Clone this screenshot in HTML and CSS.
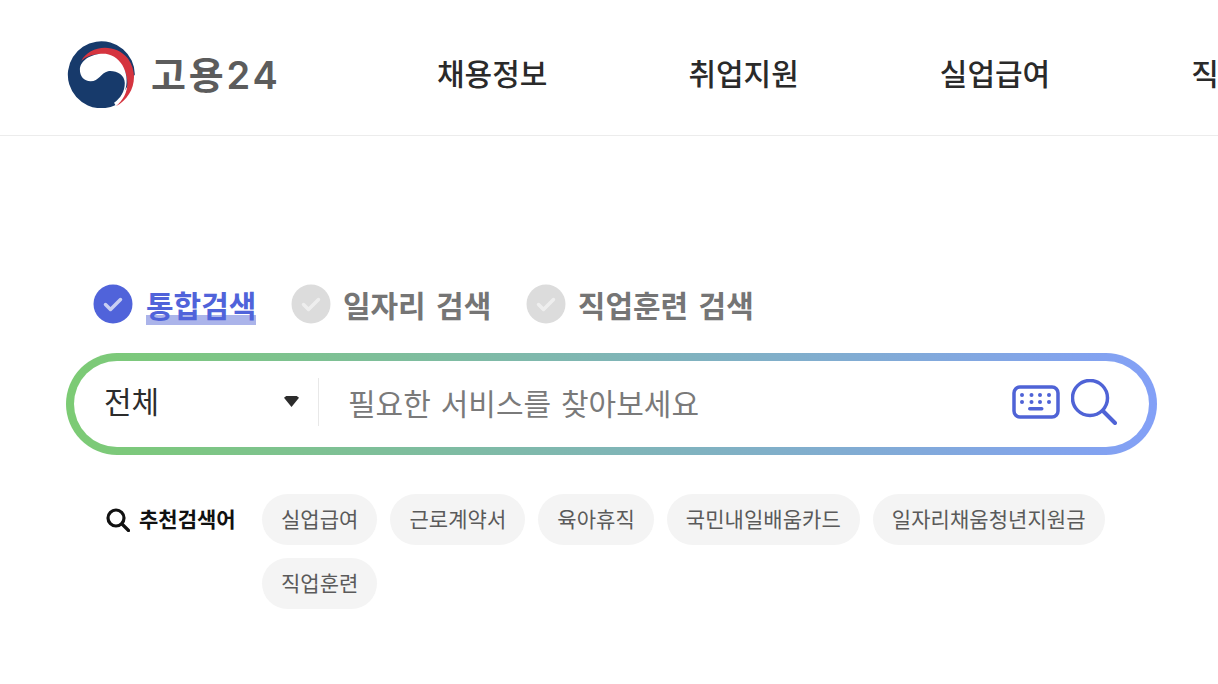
FILE: index.html
```html
<!DOCTYPE html>
<html lang="ko">
<head>
<meta charset="utf-8">
<title>고용24</title>
<link rel="stylesheet" href="styles.css">
</head>
<body>
<header class="site-header">
  <a class="logo" href="#">
    <svg class="logo-mark" viewBox="50 65 205 200" aria-hidden="true">
      <path fill="#173a6b" d="M195 256A100 100 0 1 1 252 165Z"/>
      <path fill="#d5343f" d="M92 125C115 80 190 68 232 118C268 170 245 235 195 260C228 235 240 190 220 150C195 98 125 92 92 125Z"/>
      <path fill="#fff" d="M88 150C88 122 125 100 165 103C215 110 240 170 222 215C215 235 205 250 195 258L190 249C210 235 222 215 222 190C222 165 195 152 172 155C150 160 145 185 120 185C100 185 88 170 88 150Z"/>
    </svg>
    <span class="logo-text">고용24</span>
  </a>
  <nav class="main-nav">
    <a href="#">채용정보</a>
    <a href="#">취업지원</a>
    <a href="#">실업급여</a>
    <a href="#">직업능력개발</a>
  </nav>
</header>
<main class="search-area">
  <div class="tabs">
    <div class="tab tab-active">
      <svg class="check" viewBox="0 0 40 40" aria-hidden="true"><circle cx="20" cy="20" r="19.5" fill="#5063da"/><path d="M12.500 20.500l5 5 10-10" fill="none" stroke="#c9cff2" stroke-width="3.500" stroke-linecap="round" stroke-linejoin="round"/></svg>
      <span class="tab-label">통합검색</span>
    </div>
    <div class="tab">
      <svg class="check" viewBox="0 0 40 40" aria-hidden="true"><circle cx="20" cy="20" r="19.500" fill="#dcdcdc"/><path d="M12.500 20.500l5 5 10-10" fill="none" stroke="#eeeeee" stroke-width="3.500" stroke-linecap="round" stroke-linejoin="round"/></svg>
      <span class="tab-label">일자리 검색</span>
    </div>
    <div class="tab">
      <svg class="check" viewBox="0 0 40 40" aria-hidden="true"><circle cx="20" cy="20" r="19.500" fill="#dcdcdc"/><path d="M12.500 20.500l5 5 10-10" fill="none" stroke="#eeeeee" stroke-width="3.500" stroke-linecap="round" stroke-linejoin="round"/></svg>
      <span class="tab-label">직업훈련 검색</span>
    </div>
  </div>
  <div class="search-bar">
    <div class="scope"><span class="scope-text">전체</span><i class="caret"></i></div>
    <div class="query">필요한 서비스를 찾아보세요</div>
    <svg class="kbd-icon" viewBox="0 0 48 34" aria-hidden="true">
      <rect x="2" y="2" width="44" height="30" rx="6" fill="none" stroke="#4f63d6" stroke-width="3.500"/>
      <g fill="#4f63d6"><circle cx="10" cy="10" r="2"/><circle cx="19.500" cy="10" r="2"/><circle cx="28" cy="10" r="2"/><circle cx="37" cy="10" r="2"/><circle cx="10" cy="17" r="2"/><circle cx="19.500" cy="17" r="2"/><circle cx="28" cy="17" r="2"/><circle cx="37" cy="17" r="2"/><rect x="16" y="22" width="15.500" height="3.500" rx="1.700"/></g>
    </svg>
    <svg class="search-icon" viewBox="0 0 46 46" aria-hidden="true">
      <circle cx="19" cy="19" r="17.500" fill="none" stroke="#4f63d6" stroke-width="3.500"/>
      <path d="M32 32l12 12" stroke="#4f63d6" stroke-width="4" stroke-linecap="round"/>
    </svg>
  </div>
  <div class="recommend">
    <div class="rec-label">
      <svg class="rec-icon" viewBox="0 0 24 24" aria-hidden="true"><circle cx="10" cy="10" r="8" fill="none" stroke="#111" stroke-width="3.200"/><path d="M16 16l6.500 6.500" stroke="#111" stroke-width="3.200" stroke-linecap="round"/></svg>
      <span class="rec-text">추천검색어</span>
    </div>
    <div class="chips">
      <a class="chip" href="#">실업급여</a>
      <a class="chip" href="#">근로계약서</a>
      <a class="chip" href="#">육아휴직</a>
      <a class="chip" href="#">국민내일배움카드</a>
      <a class="chip" href="#">일자리채움청년지원금</a>
      <a class="chip" href="#">직업훈련</a>
    </div>
  </div>
</main>
</body>
</html>
```
FILE: styles.css
```css
* { box-sizing: border-box; }
html, body { margin: 0; height: 100%; overflow: hidden; }
body { background: #fff; color: #222; font-family: "Noto Sans CJK KR", "Noto Sans", sans-serif; }
a { color: inherit; text-decoration: none; }

.site-header { display: flex; align-items: center; height: 136px; padding: 8px 0 0 67px; border-bottom: 1px solid #ececec; white-space: nowrap; }
.logo { display: flex; align-items: center; gap: 15px; width: 370px; margin-top: 6px; flex: none; }
.logo-mark { width: 69px; height: 67px; flex: none; }
.logo-text { font-family: Inter, "Noto Sans CJK KR", sans-serif; font-size: 38px; font-weight: 600; letter-spacing: 2.800px; color: #5c5c5c; line-height: 1; }
.main-nav { display: flex; gap: 141px; font-size: 30px; font-weight: 500; color: #2a2a2a; line-height: 40px; }

.search-area { padding: 147px 61px 0 66px; }
.tabs { display: flex; align-items: center; gap: 34.500px; padding-left: 27px; height: 42px; }
.tab { display: flex; align-items: center; gap: 12px; font-size: 30px; font-weight: 700; color: #757575; word-spacing: 2px; }
.tab-label { line-height: 42px; }
.tab-active { gap: 13px; color: #5063da; }
.tab-active .tab-label { background: linear-gradient(#abb4ea, #abb4ea) left bottom / 100% 10px no-repeat; line-height: 40px; height: 41px; }
.check { width: 40px; height: 40px; flex: none; }

.search-bar { display: flex; align-items: center; height: 102px; margin-top: 28px; padding: 0 32px 5px 30px; border: 8px solid transparent; border-radius: 51px; background: linear-gradient(#fff, #fff) padding-box, linear-gradient(90deg, #7ccb74 0%, #83a0f7 100%) border-box; }
.scope { display: flex; align-items: center; justify-content: space-between; width: 215px; height: 48px; padding-right: 19px; border-right: 1px solid #e8e8e8; font-size: 30px; color: #2c2c2c; flex: none; }
.scope-text { margin-bottom: 4px; }
.caret { width: 15px; height: 11px; background: #2c2c2c; clip-path: polygon(0 15%, 15% 0, 85% 0, 100% 15%, 50% 100%); }
.query { flex: 1; padding: 1px 0 0 29px; font-size: 30px; word-spacing: 1.500px; color: #7a7a7a; white-space: nowrap; }
.kbd-icon { width: 48px; height: 34px; flex: none; margin-right: 11px; }
.search-icon { width: 46px; height: 46px; flex: none; }

.recommend { display: flex; margin-top: 39px; padding-left: 40px; }
.rec-label { display: flex; align-items: center; gap: 9px; width: 156px; height: 51px; font-size: 21px; font-weight: 700; color: #111; flex: none; }
.rec-icon { width: 24px; height: 24px; flex: none; }
.rec-text { margin-bottom: 3px; }
.chips { display: flex; flex-wrap: wrap; gap: 13px; }
.chip { display: flex; align-items: center; height: 51px; padding: 0 19px 4px; border-radius: 26px; background: #f4f4f4; font-size: 21px; letter-spacing: 0.050px; color: #5a5a5a; white-space: nowrap; }
```
